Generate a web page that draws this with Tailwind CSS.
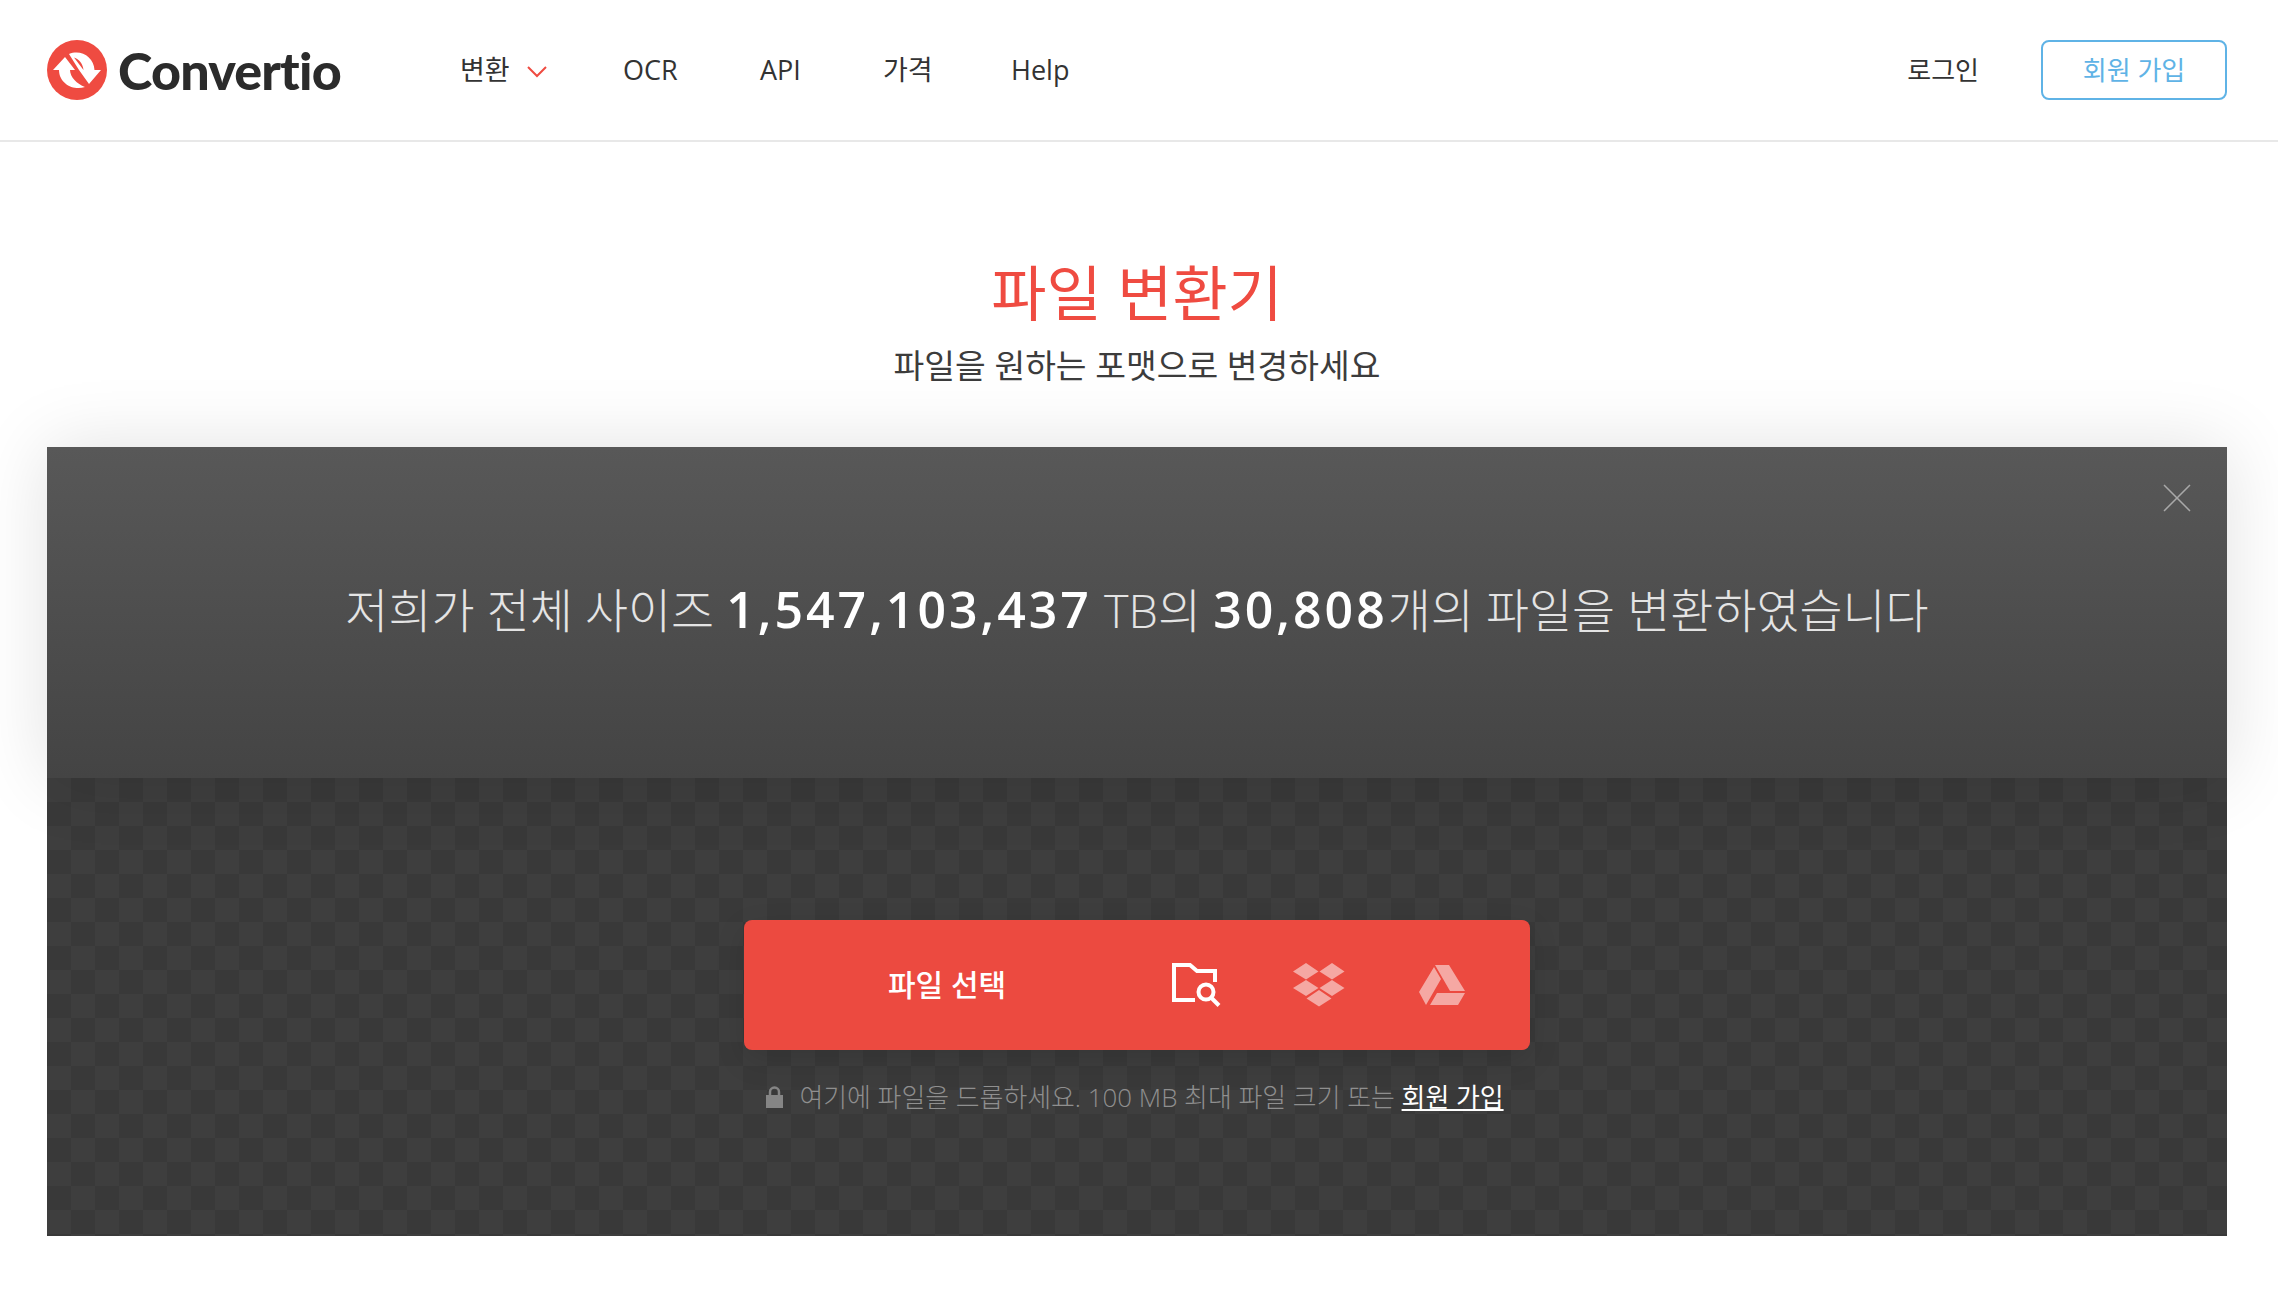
<!DOCTYPE html>
<html lang="ko">
<head>
  <meta charset="UTF-8">
  <title>Convertio</title>
  <script src="https://cdn.jsdelivr.net/npm/@tailwindcss/browser@4"></script>
</head>
<body class="bg-white h-[1292px] overflow-hidden font-['Open_Sans','Noto_Sans_CJK_KR',sans-serif] text-[#2f2f2f]">
  <!-- Header -->
  <header class="h-[142px] border-b-2 border-[#e8e8e8] pl-[47px] pr-[51px] flex items-center">
    <a class="flex items-center w-[413px] shrink-0">
      <svg class="w-[60px] h-[60px] shrink-0" viewBox="0 0 60 60">
        <circle cx="30" cy="30" r="30" fill="#ef4b41"/>
        <path fill="#fff" d="M6 30 18 17 28 30H23C23 37 30 44 38 47 27 51 12 44 12 30Z"/>
        <path fill="#fff" d="M22 14C34 9 47 17 47.500 30H54L42 44 32 30 22 14ZM27 17.500 36.500 30C36 24 32 19 27 17.500Z" fill-rule="evenodd"/>
      </svg>
      <span class="ml-[11px] text-[52px] leading-none font-black tracking-[-0.800px] text-[#2b2b2b] font-['Lato']">Convertio</span>
    </a>
    <nav class="flex items-center text-[27px] text-[#333]">
      <a class="flex items-center w-[163px]">변환
        <svg class="ml-[17px] mt-[3px] w-[20px] h-[12px]" viewBox="0 0 20 12" fill="none" stroke="#ef4b41" stroke-width="2"><path d="M1 1l9 9 9-9"/></svg>
      </a>
      <a class="w-[137px]">OCR</a>
      <a class="w-[123px]">API</a>
      <a class="w-[128px]">가격</a>
      <a>Help</a>
    </nav>
    <div class="ml-auto flex items-center">
      <a class="text-[26px] mr-[62px] text-[#333]">로그인</a>
      <a class="w-[186px] h-[60px] flex items-center justify-center rounded-[8px] border-2 border-[#5fb3e6] text-[#5fb3e6] text-[26px]">회원 가입</a>
    </div>
  </header>

  <!-- Title -->
  <div class="text-center pt-[113px] pr-[4px] h-[305px]">
    <h1 class="text-[60px] leading-[76px] font-normal text-[#ef4b41]">파일 변환기</h1>
    <p class="text-[33.400px] leading-[46px] mt-[11px] text-[#3c3c3c]">파일을 원하는 포맷으로 변경하세요</p>
  </div>

  <!-- Panel -->
  <main class="ml-[47px] mr-[51px]">
    <section class="relative z-10 h-[331px] bg-gradient-to-b from-[#585858] to-[#444444] flex justify-center pt-[130px] shadow-[0_0_70px_rgba(0,0,0,0.12)]">
      <svg class="absolute right-[36px] top-[37px] w-[28px] h-[28px]" viewBox="0 0 28 28" stroke="#a8a8a8" stroke-width="1.500"><path d="M1 1l26 26M27 1L1 27"/></svg>
      <p class="text-[46.800px] leading-[64px] font-light text-[#e4e4e4] whitespace-nowrap">저희가 전체 사이즈 <b class="font-semibold text-white tracking-[3px] text-[50px]">1,547,103,437</b> TB의 <b class="font-semibold text-white tracking-[3px] text-[50px]">30,808</b>개의 파일을 변환하였습니다</p>
    </section>
    <section class="h-[458px] bg-[repeating-conic-gradient(#393939_0_25%,#3e3e3e_0_50%)] bg-[length:48px_48px] pt-[142px] flex flex-col items-center">
      <div class="w-[786px] h-[130px] rounded-[8px] bg-[#ec4a40] flex items-center shadow-[0_10px_30px_rgba(0,0,0,0.12)]">
        <span class="w-[406px] text-center text-white text-[30px] font-medium pb-[2px]">파일 선택</span>
        <svg class="w-[50px] h-[46px] ml-[21px]" viewBox="0 0 50 46" fill="none" stroke="#fff" stroke-width="4"><path d="M24 38H3V3h16l7 6h18v11"/><circle cx="35" cy="30" r="7.500"/><path d="M40 35.500l8 8"/></svg>
        <svg class="w-[52px] h-[44px] ml-[72px]" viewBox="0 0 52 44" fill="#f5a8a3"><path d="M13 0l12.500 8.500L13 16.500 0 8.500zM39 0l12.500 8.500L39 16.500 26.500 8.500zM13 17l12.500 8L13 33 0 25zM39 17l12.500 8L39 33 26.500 25zM26 27l12.500 8.500L26 43.500 13.500 35.500z"/></svg>
        <svg class="w-[46px] h-[41px] ml-[74px]" viewBox="0 0 46 41" fill="#f5a8a3"><path d="M16 0h14l16 26H31zM15 2l7 12L7 40 0 27zM11 40l7-12h28l-7 12z"/></svg>
      </div>
      <p class="mt-[29px] pr-[4px] text-[25.900px] leading-[36px] text-[#8f8f8f] font-light flex items-center whitespace-nowrap">
        <svg class="w-[17px] h-[22px] mr-[16px]" viewBox="0 0 17 22" fill="#858585"><path d="M0 9h17v13H0z"/><path d="M4 10V6a4.500 4.500 0 0 1 9 0v4" fill="none" stroke="#858585" stroke-width="2.500"/></svg>
        <span>여기에 파일을 드롭하세요. 100 MB 최대 파일 크기 또는 <a class="text-white underline font-normal">회원 가입</a></span>
      </p>
    </section>
  </main>
</body>
</html>
